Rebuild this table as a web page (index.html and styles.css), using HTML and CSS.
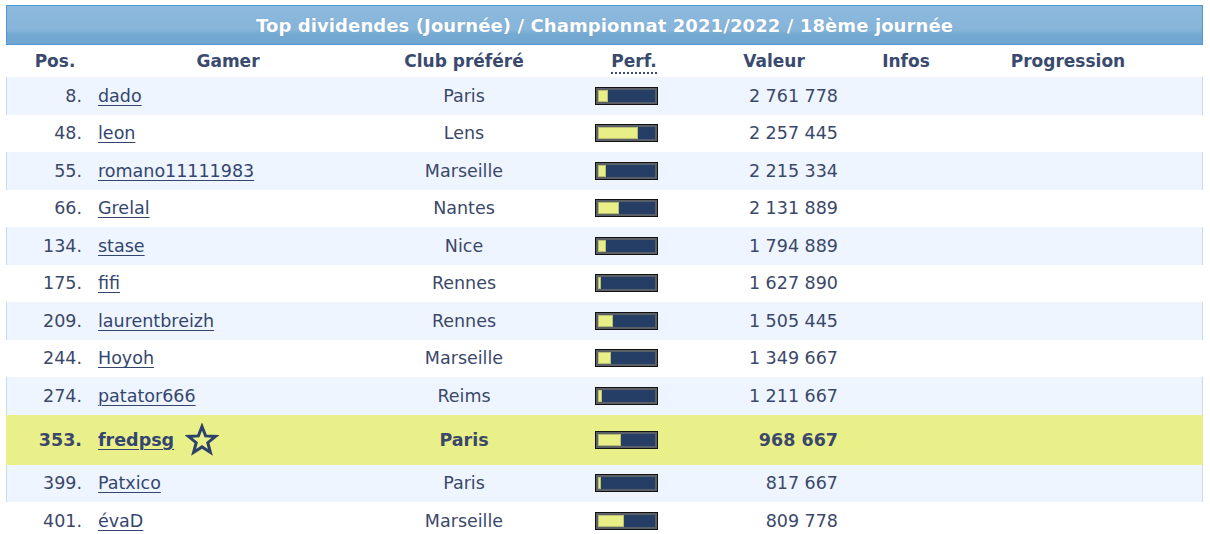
FILE: index.html
```html
<!DOCTYPE html>
<html lang="fr">
<head>
<meta charset="utf-8">
<title>Top dividendes</title>
<link rel="stylesheet" href="styles.css">
</head>
<body>
<div class="board">
  <div class="title">Top dividendes (Journée) / Championnat 2021/2022 / 18ème journée</div>
  <div class="row head">
    <div class="c-pos">Pos.</div>
    <div class="c-gamer">Gamer</div>
    <div class="c-club">Club préféré</div>
    <div class="c-perf"><span class="abbr">Perf.</span></div>
    <div class="c-val">Valeur</div>
    <div class="c-info">Infos</div>
    <div class="c-prog">Progression</div>
  </div>

  <div class="row alt">
    <div class="c-pos">8.</div>
    <div class="c-gamer"><a href="#">dado</a></div>
    <div class="c-club">Paris</div>
    <div class="c-perf"><div class="bar"><div class="fill" style="width:17%"></div></div></div>
    <div class="c-val">2 761 778</div>
    <div class="c-info"></div><div class="c-prog"></div>
  </div>
  <div class="row">
    <div class="c-pos">48.</div>
    <div class="c-gamer"><a href="#">leon</a></div>
    <div class="c-club">Lens</div>
    <div class="c-perf"><div class="bar"><div class="fill" style="width:70%"></div></div></div>
    <div class="c-val">2 257 445</div>
    <div class="c-info"></div><div class="c-prog"></div>
  </div>
  <div class="row alt">
    <div class="c-pos">55.</div>
    <div class="c-gamer"><a href="#">romano11111983</a></div>
    <div class="c-club">Marseille</div>
    <div class="c-perf"><div class="bar"><div class="fill" style="width:14%"></div></div></div>
    <div class="c-val">2 215 334</div>
    <div class="c-info"></div><div class="c-prog"></div>
  </div>
  <div class="row">
    <div class="c-pos">66.</div>
    <div class="c-gamer"><a href="#">Grelal</a></div>
    <div class="c-club">Nantes</div>
    <div class="c-perf"><div class="bar"><div class="fill" style="width:36%"></div></div></div>
    <div class="c-val">2 131 889</div>
    <div class="c-info"></div><div class="c-prog"></div>
  </div>
  <div class="row alt">
    <div class="c-pos">134.</div>
    <div class="c-gamer"><a href="#">stase</a></div>
    <div class="c-club">Nice</div>
    <div class="c-perf"><div class="bar"><div class="fill" style="width:14%"></div></div></div>
    <div class="c-val">1 794 889</div>
    <div class="c-info"></div><div class="c-prog"></div>
  </div>
  <div class="row">
    <div class="c-pos">175.</div>
    <div class="c-gamer"><a href="#">fifi</a></div>
    <div class="c-club">Rennes</div>
    <div class="c-perf"><div class="bar"><div class="fill" style="width:5%"></div></div></div>
    <div class="c-val">1 627 890</div>
    <div class="c-info"></div><div class="c-prog"></div>
  </div>
  <div class="row alt">
    <div class="c-pos">209.</div>
    <div class="c-gamer"><a href="#">laurentbreizh</a></div>
    <div class="c-club">Rennes</div>
    <div class="c-perf"><div class="bar"><div class="fill" style="width:27%"></div></div></div>
    <div class="c-val">1 505 445</div>
    <div class="c-info"></div><div class="c-prog"></div>
  </div>
  <div class="row">
    <div class="c-pos">244.</div>
    <div class="c-gamer"><a href="#">Hoyoh</a></div>
    <div class="c-club">Marseille</div>
    <div class="c-perf"><div class="bar"><div class="fill" style="width:23%"></div></div></div>
    <div class="c-val">1 349 667</div>
    <div class="c-info"></div><div class="c-prog"></div>
  </div>
  <div class="row alt">
    <div class="c-pos">274.</div>
    <div class="c-gamer"><a href="#">patator666</a></div>
    <div class="c-club">Reims</div>
    <div class="c-perf"><div class="bar"><div class="fill" style="width:7%"></div></div></div>
    <div class="c-val">1 211 667</div>
    <div class="c-info"></div><div class="c-prog"></div>
  </div>
  <div class="row me">
    <div class="c-pos">353.</div>
    <div class="c-gamer"><a href="#">fredpsg</a>
      <svg class="star" viewBox="0 0 34 34" width="34" height="34" aria-hidden="true">
        <polygon points="17,3.5 20.6,12.9 30.6,13.4 22.8,19.7 25.4,29.4 17,23.9 8.6,29.4 11.2,19.7 3.4,13.4 13.4,12.9" fill="none" stroke="#2d416b" stroke-width="3" stroke-linejoin="miter"/>
      </svg>
    </div>
    <div class="c-club">Paris</div>
    <div class="c-perf"><div class="bar"><div class="fill" style="width:41%"></div></div></div>
    <div class="c-val">968 667</div>
    <div class="c-info"></div><div class="c-prog"></div>
  </div>
  <div class="row alt">
    <div class="c-pos">399.</div>
    <div class="c-gamer"><a href="#">Patxico</a></div>
    <div class="c-club">Paris</div>
    <div class="c-perf"><div class="bar"><div class="fill" style="width:5%"></div></div></div>
    <div class="c-val">817 667</div>
    <div class="c-info"></div><div class="c-prog"></div>
  </div>
  <div class="row">
    <div class="c-pos">401.</div>
    <div class="c-gamer"><a href="#">évaD</a></div>
    <div class="c-club">Marseille</div>
    <div class="c-perf"><div class="bar"><div class="fill" style="width:45%"></div></div></div>
    <div class="c-val">809 778</div>
    <div class="c-info"></div><div class="c-prog"></div>
  </div>
</div>
</body>
</html>
```

FILE: styles.css
```css
html, body {
  margin: 0;
  padding: 0;
  background: #ffffff;
}
body {
  padding: 5px 7px 0 6px;
  font-family: "DejaVu Sans", Verdana, sans-serif;
  font-size: 17.5px;
  color: #3b4869;
  overflow: hidden;
}
.board {
  width: 1197px;
}
.title {
  height: 38px;
  border: 1px solid #4b97d8;
  background: linear-gradient(to bottom, #8cb9dd 0%, #87b5da 62%, #74a9d2 74%, #6fa5cf 100%);
  color: #ffffff;
  font-weight: bold;
  font-size: 18px;
  letter-spacing: 0.1px;
  display: flex;
  align-items: center;
  justify-content: center;
  text-shadow: 0 0 1px rgba(60, 100, 150, 0.4);
}
.row {
  display: grid;
  grid-template-columns: 86px 272px 200px 140px 140px 124px 1fr;
  height: 37.5px;
  align-items: center;
}
.row.head {
  height: 32px;
  font-size: 17px;
  font-weight: bold;
  color: #3a4a6e;
}
.row.alt {
  background: #eef5fe;
  box-shadow: inset 1px 0 0 #c8dcf0, inset -1px 0 0 #c8dcf0;
}
.row.me {
  height: 50px;
  background: #e9f08a;
  font-weight: bold;
}
.c-pos {
  text-align: right;
  padding-right: 10px;
}
.head .c-pos {
  text-align: center;
  padding-right: 0;
  padding-left: 12px;
}
.c-gamer {
  padding-left: 6px;
  display: flex;
  align-items: center;
}
.head .c-gamer {
  justify-content: center;
  padding-left: 0;
}
.c-gamer a {
  color: #34466f;
  text-decoration: underline;
  text-underline-offset: 3px;
  text-decoration-thickness: 1px;
}
.star {
  margin-left: 11px;
  display: block;
}
.c-club {
  text-align: center;
}
.c-perf {
  padding-left: 31px;
}
.head .c-perf {
  padding-left: 0;
  text-align: center;
}
.abbr {
  border-bottom: 2px dotted #3a4a6e;
  padding-bottom: 1px;
}
.bar {
  width: 57px;
  height: 12px;
  border: 1px solid #111111;
  box-shadow: inset 0 0 0 2px #5b5f66;
  padding: 2px;
  background: #253e66;
  display: flex;
}
.bar .fill {
  height: 100%;
  background: #e7ef86;
  box-shadow: inset 0 0 0 1px #b9be74;
}
.c-val {
  text-align: right;
  padding-right: 6px;
}
.head .c-val {
  text-align: center;
  padding-right: 0;
}
.c-info {
  text-align: center;
}
.c-prog {
  text-align: center;
  padding-right: 35px;
}
```
